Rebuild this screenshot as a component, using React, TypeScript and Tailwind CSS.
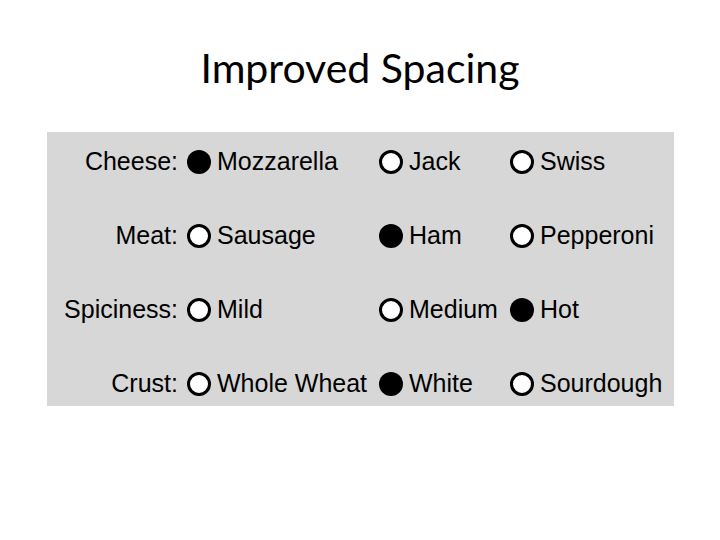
const rows = [
  { label: "Cheese:", options: ["Mozzarella", "Jack", "Swiss"], selected: 0 },
  { label: "Meat:", options: ["Sausage", "Ham", "Pepperoni"], selected: 1 },
  { label: "Spiciness:", options: ["Mild", "Medium", "Hot"], selected: 2 },
  { label: "Crust:", options: ["Whole Wheat", "White", "Sourdough"], selected: 1 },
];

const Radio = ({ checked }: { checked: boolean }) => (
  <span
    className={
      checked
        ? "w-[24px] h-[24px] rounded-full bg-black shrink-0"
        : "w-[24px] h-[24px] rounded-full bg-white border-[3px] border-black shrink-0"
    }
  />
);

const App = () => {
  return (
    <div className="w-[720px] h-[540px] bg-white relative">
      <h1 className="pt-[40px] text-center text-[41px] leading-[56px] text-black [font-family:Lato,sans-serif]">
        Improved Spacing
      </h1>

      <div className="mt-[36px] ml-[47px] w-[627px] h-[274px] bg-[#d7d7d7] pt-[8px] [font-family:'Liberation_Sans',Arial,sans-serif] text-[25px] text-black">
        <div className="grid grid-cols-[140px_192px_131px_1fr] gap-y-[30px]">
          {rows.map((row) => (
            <div key={row.label} className="contents">
              <div className="h-[44px] flex items-center justify-end pr-[9px]">
                {row.label}
              </div>
              {row.options.map((opt, i) => (
                <div key={opt} className="h-[44px] flex items-center gap-[6px]">
                  <Radio checked={i === row.selected} />
                  <span>{opt}</span>
                </div>
              ))}
            </div>
          ))}
        </div>
      </div>
    </div>
  );
};

export default App;
